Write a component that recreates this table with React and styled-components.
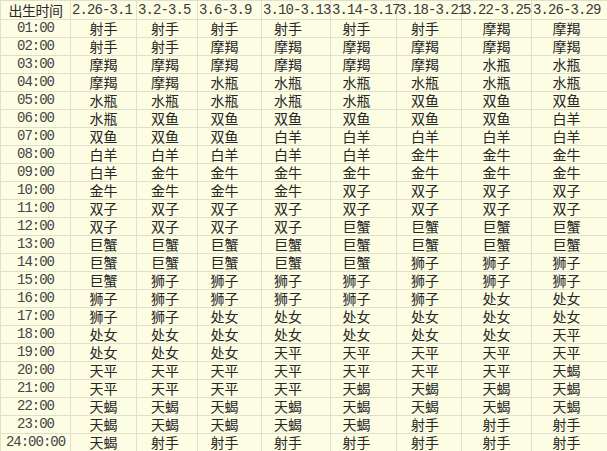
import React from 'react';
import styled, { createGlobalStyle } from 'styled-components';

const GlobalStyle = createGlobalStyle`
  html, body {
    margin: 0;
    padding: 0;
    background: #fdfde4;
  }
`;

const headers = ['2.26-3.1', '3.2-3.5', '3.6-3.9', '3.10-3.13', '3.14-3.17', '3.18-3.21', '3.22-3.25', '3.26-3.29'];
const widths = [70, 66, 61, 64, 69, 66, 65, 70, 76];
// the sign text in the reference sits a little left of centre in some columns
const shifts = [0, -2, -5, -8, -7, -4, 0, -3];

const rows = [
    ['01:00', '射手 射手 射手 射手 射手 射手 摩羯 摩羯'],
    ['02:00', '射手 射手 摩羯 摩羯 摩羯 摩羯 摩羯 摩羯'],
    ['03:00', '摩羯 摩羯 摩羯 摩羯 摩羯 摩羯 水瓶 水瓶'],
    ['04:00', '摩羯 摩羯 水瓶 水瓶 水瓶 水瓶 水瓶 水瓶'],
    ['05:00', '水瓶 水瓶 水瓶 水瓶 水瓶 双鱼 双鱼 双鱼'],
    ['06:00', '水瓶 双鱼 双鱼 双鱼 双鱼 双鱼 双鱼 白羊'],
    ['07:00', '双鱼 双鱼 双鱼 白羊 白羊 白羊 白羊 白羊'],
    ['08:00', '白羊 白羊 白羊 白羊 白羊 金牛 金牛 金牛'],
    ['09:00', '白羊 金牛 金牛 金牛 金牛 金牛 金牛 金牛'],
    ['10:00', '金牛 金牛 金牛 金牛 双子 双子 双子 双子'],
    ['11:00', '双子 双子 双子 双子 双子 双子 双子 双子'],
    ['12:00', '双子 双子 双子 双子 巨蟹 巨蟹 巨蟹 巨蟹'],
    ['13:00', '巨蟹 巨蟹 巨蟹 巨蟹 巨蟹 巨蟹 巨蟹 巨蟹'],
    ['14:00', '巨蟹 巨蟹 巨蟹 巨蟹 巨蟹 狮子 狮子 狮子'],
    ['15:00', '巨蟹 狮子 狮子 狮子 狮子 狮子 狮子 狮子'],
    ['16:00', '狮子 狮子 狮子 狮子 狮子 狮子 处女 处女'],
    ['17:00', '狮子 狮子 处女 处女 处女 处女 处女 处女'],
    ['18:00', '处女 处女 处女 处女 处女 处女 处女 天平'],
    ['19:00', '处女 处女 处女 天平 天平 天平 天平 天平'],
    ['20:00', '天平 天平 天平 天平 天平 天平 天平 天蝎'],
    ['21:00', '天平 天平 天平 天平 天蝎 天蝎 天蝎 天蝎'],
    ['22:00', '天蝎 天蝎 天蝎 天蝎 天蝎 天蝎 天蝎 天蝎'],
    ['23:00', '天蝎 天蝎 天蝎 天蝎 天蝎 射手 射手 射手'],
    ['24:00:00', '天蝎 射手 射手 射手 射手 射手 射手 射手'],
];

function App() {
    return (
        <>
            <GlobalStyle />
            <Table>
                <colgroup>
                    {widths.map((w, i) => (
                        <col key={i} style={{ width: w }} />
                    ))}
                </colgroup>
                <thead>
                    <HeadRow>
                        <LabelHead>出生时间</LabelHead>
                        {headers.map((h) => (
                            <DateHead key={h}>{h}</DateHead>
                        ))}
                    </HeadRow>
                </thead>
                <tbody>
                    {rows.map(([time, signs]) => (
                        <Row key={time}>
                            <TimeCell>{time}</TimeCell>
                            {signs.split(' ').map((s, i) => (
                                <SignCell key={i} $shift={shifts[i]}>
                                    {s}
                                </SignCell>
                            ))}
                        </Row>
                    ))}
                </tbody>
            </Table>
        </>
    );
}

const Table = styled.table`
  width: 607px;
  table-layout: fixed;
  border-collapse: collapse;
  background: #fdfde4;
  color: #2a2a2a;

  td, th {
    border: 1px solid #e0dfc9;
    padding: 0;
    overflow: visible;
    white-space: nowrap;
    font-weight: normal;
  }
`;

const HeadRow = styled.tr`
  height: 19px;
`;

const Row = styled.tr`
  height: 18px;
`;

const LabelHead = styled.th`
  font-family: "Noto Sans CJK SC", sans-serif;
  font-size: 14px;
  letter-spacing: -0.5px;
  text-align: center;
  line-height: 18px;
`;

const DateHead = styled.th`
  font-family: "Liberation Mono", monospace;
  font-size: 14px;
  letter-spacing: -0.9px;
  text-align: left;
  padding-left: 1px !important;
  line-height: 18px;
  color: #3a3a3a;
`;

const TimeCell = styled.td`
  font-family: "Liberation Mono", monospace;
  font-size: 14px;
  letter-spacing: -1px;
  text-align: center;
  line-height: 17px;
  color: #444;
`;

const SignCell = styled.td`
  font-family: "Noto Sans CJK SC", sans-serif;
  font-size: 14px;
  text-align: center;
  line-height: 17px;
  color: #262626;
  padding-right: ${({ $shift }) => -$shift * 2}px !important;
`;

export default App;
